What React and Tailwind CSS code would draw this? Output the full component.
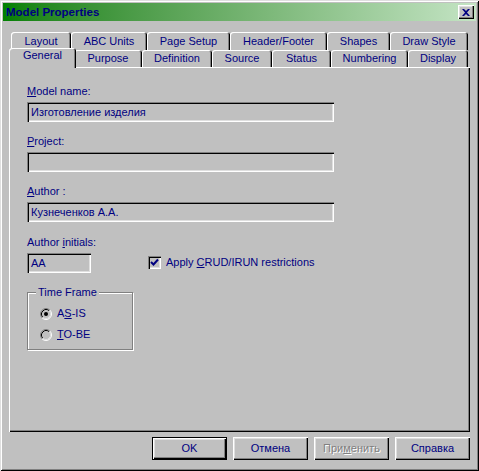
import React from "react";

const row1 = [
  ["Layout", 60],
  ["ABC Units", 76],
  ["Page Setup", 83],
  ["Header/Footer", 97],
  ["Shapes", 63],
  ["Draw Style", 78],
];
const row2 = [
  ["General", 63, true],
  ["Purpose", 68],
  ["Definition", 70],
  ["Source", 60],
  ["Status", 59],
  ["Numbering", 77],
  ["Display", 60],
];

const tabShadow =
  "shadow-[inset_1px_1px_#fff,inset_-1px_0_#000,inset_-2px_0_#808080]";

function Tab({ label, w }) {
  return (
    <div
      className={`h-full shrink-0 flex items-center justify-center rounded-t-[3px] ${tabShadow} text-[#000080]`}
      style={{ width: w }}
    >
      {label}
    </div>
  );
}

function SelTab({ label, w }) {
  return (
    <div
      className="relative z-10 shrink-0 h-[20px] -mx-[2px] -mb-[1px] flex justify-center pt-[1px] rounded-t-[3px] bg-[#c0c0c0] shadow-[inset_1px_1px_#fff,inset_-1px_0_#000,inset_-2px_0_#808080] text-[#000080]"
      style={{ width: w + 4 }}
    >
      {label}
    </div>
  );
}

const sunken =
  "shadow-[inset_1px_1px_#808080,inset_2px_2px_#000,inset_-1px_-1px_#fff,inset_-2px_-2px_#dfdfdf]";

function Field({ value, className }) {
  return (
    <div
      className={`h-[20px] bg-[#c0c0c0] ${sunken} flex items-center pl-[4px] text-[#000080] ${className}`}
    >
      {value}
    </div>
  );
}

function Radio({ checked }) {
  return (
    <svg width="12" height="12" viewBox="0 0 12 12" className="shrink-0">
      <circle cx="6" cy="6" r="5" fill="#c0c0c0" />
      <path d="M2.11 9.89 A5.5 5.5 0 0 1 9.89 2.11" stroke="#808080" strokeWidth="1" fill="none" />
      <path d="M9.89 2.11 A5.5 5.5 0 0 1 2.11 9.89" stroke="#ffffff" strokeWidth="1" fill="none" />
      <path d="M2.82 9.18 A4.5 4.5 0 0 1 9.18 2.82" stroke="#000000" strokeWidth="1" fill="none" />
      <path d="M9.18 2.82 A4.5 4.5 0 0 1 2.82 9.18" stroke="#dfdfdf" strokeWidth="1" fill="none" />
      {checked && <circle cx="6" cy="6" r="2" fill="#000000" />}
    </svg>
  );
}

const raised =
  "shadow-[inset_1px_1px_#fff,inset_-1px_-1px_#000,inset_-2px_-2px_#808080,inset_2px_2px_#dfdfdf]";

export default function App() {
  return (
    <div className="w-[479px] h-[471px] bg-[#c0c0c0] p-[3px] flex flex-col shadow-[inset_1px_1px_#dfdfdf,inset_-1px_-1px_#000,inset_2px_2px_#fff,inset_-2px_-2px_#808080] font-['Liberation_Sans',Arial,sans-serif] text-[11px] leading-[13px] select-none">
      {/* Title bar */}
      <div className="h-[18px] flex items-center justify-between pl-[3px] pr-[2px] bg-linear-to-r from-[#008000] to-[#c4e4c4]">
        <span className="font-bold text-[11.5px] text-[#000080]">Model Properties</span>
        <div className={`w-[16px] h-[14px] bg-[#c0c0c0] ${raised} flex items-center justify-center`}>
          <svg width="8" height="7" viewBox="0 0 8 7">
            <path d="M0 0h2l2 2 2-2h2L5 3.5 8 7H6L4 5 2 7H0l3-3.5z" fill="#000080" />
          </svg>
        </div>
      </div>

      {/* Tab control */}
      <div className="mt-[11px] ml-[6px] w-[461px] flex flex-col">
        <div className="h-[18px] flex pl-[2px]">
          {row1.map(([l, w]) => (
            <Tab key={l} label={l} w={w} />
          ))}
        </div>
        <div className="h-[17px] flex items-end pl-[2px]">
          {row2.map(([l, w, sel]) =>
            sel ? <SelTab key={l} label={l} w={w} /> : <Tab key={l} label={l} w={w} />
          )}
        </div>
        <div className="h-[365px] shadow-[inset_1px_1px_#fff,inset_-1px_-1px_#000,inset_-2px_-2px_#808080] pt-[18px] pl-[18px] flex flex-col text-[#000080]">
          <div>
            <u>M</u>odel name:
          </div>
          <Field value="Изготовление изделия" className="mt-[4px] w-[307px]" />
          <div className="mt-[13px]">
            <u>P</u>roject:
          </div>
          <Field value="" className="mt-[4px] w-[307px]" />
          <div className="mt-[13px]">
            <u>A</u>uthor :
          </div>
          <Field value="Кузнеченков А.А." className="mt-[4px] w-[307px]" />
          <div className="mt-[14px]">
            Author <u>i</u>nitials:
          </div>
          <div className="mt-[4px] flex">
            <Field value="AA" className="w-[64px]" />
            <div className="ml-[57px] mt-[3px] h-[13px] flex items-center">
              <div className={`w-[13px] h-[13px] bg-[#c0c0c0] ${sunken} flex items-center justify-center`}>
                <svg width="9" height="9" viewBox="0 0 9 9">
                  <path d="M1 4 L3.5 6.5 L8 1.5" stroke="#000080" strokeWidth="2" fill="none" />
                </svg>
              </div>
              <span className="ml-[5px]">
                Apply <u>C</u>RUD/IRUN restrictions
              </span>
            </div>
          </div>
          <div className="relative mt-[19px] w-[106px] h-[58px] border border-[#808080] shadow-[1px_1px_#fff,inset_1px_1px_#fff] pt-[14px] pl-[12px]">
            <span className="absolute -top-[7px] left-[8px] bg-[#c0c0c0] px-[2px]">Time Frame</span>
            <div className="h-[13px] flex items-center">
              <Radio checked />
              <span className="ml-[5px]">
                A<u>S</u>-IS
              </span>
            </div>
            <div className="mt-[8px] h-[13px] flex items-center">
              <Radio />
              <span className="ml-[5px]">
                <u>T</u>O-BE
              </span>
            </div>
          </div>
        </div>
      </div>

      {/* Buttons */}
      <div className="mt-[5px] ml-[149px] flex gap-[6px] text-[#000080]">
        <div className={`w-[75px] h-[23px] border border-black ${raised} flex items-center justify-center`}>
          OK
        </div>
        <div className={`w-[75px] h-[23px] ${raised} flex items-center justify-center`}>
          Отмена
        </div>
        <div
          className={`w-[75px] h-[23px] ${raised} flex items-center justify-center text-[#808080] [text-shadow:1px_1px_0_#fff]`}
        >
          При<u>м</u>енить
        </div>
        <div className={`w-[75px] h-[23px] ${raised} flex items-center justify-center`}>
          Справка
        </div>
      </div>
    </div>
  );
}
